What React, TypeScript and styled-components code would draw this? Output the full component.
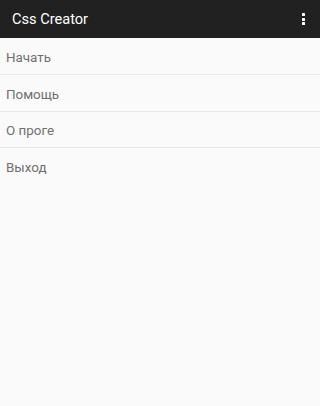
import styled, { createGlobalStyle } from 'styled-components';

const GlobalStyle = createGlobalStyle`
  html, body {
    margin: 0;
    padding: 0;
    background: #fafafa;
  }
  body {
    font-family: Roboto, "Noto Sans", sans-serif;
  }
`;

const Screen = styled.div`
  width: 100%;
  min-height: 406px;
  background: #fafafa;
  display: flex;
  flex-direction: column;
`;

const Toolbar = styled.header`
  height: 38px;
  background: #212121;
  display: flex;
  align-items: center;
  justify-content: space-between;
  padding: 0 15px 0 12px;
  box-sizing: border-box;
`;

const Title = styled.h1`
  margin: 0;
  font-size: 14.6px;
  font-weight: 400;
  color: #ffffff;
`;

const Overflow = styled.div`
  display: flex;
  flex-direction: column;
  gap: 1.6px;
`;

const Dot = styled.span`
  width: 3px;
  height: 3px;
  background: #ffffff;
  border-radius: 0.5px;
`;

const Menu = styled.ul`
  list-style: none;
  margin: 0;
  padding: 0;
`;

const Item = styled.li<{ $last?: boolean }>`
  height: 36.8px;
  display: flex;
  align-items: center;
  padding: 3px 0 0 6px;
  font-size: 13.4px;
  color: #6f6f6f;
  border-bottom: 1px solid ${(props) => (props.$last ? 'transparent' : '#e9e9e9')};
  box-sizing: border-box;
`;

const items: string[] = ['Начать', 'Помощь', 'О проге', 'Выход'];

const App = () => {
  return (
    <>
      <GlobalStyle />
      <Screen>
        <Toolbar>
          <Title>Css Creator</Title>
          <Overflow>
            <Dot />
            <Dot />
            <Dot />
          </Overflow>
        </Toolbar>
        <Menu>
          {items.map((label, i) => (
            <Item key={label} $last={i === items.length - 1}>
              {label}
            </Item>
          ))}
        </Menu>
      </Screen>
    </>
  );
};

export default App;
